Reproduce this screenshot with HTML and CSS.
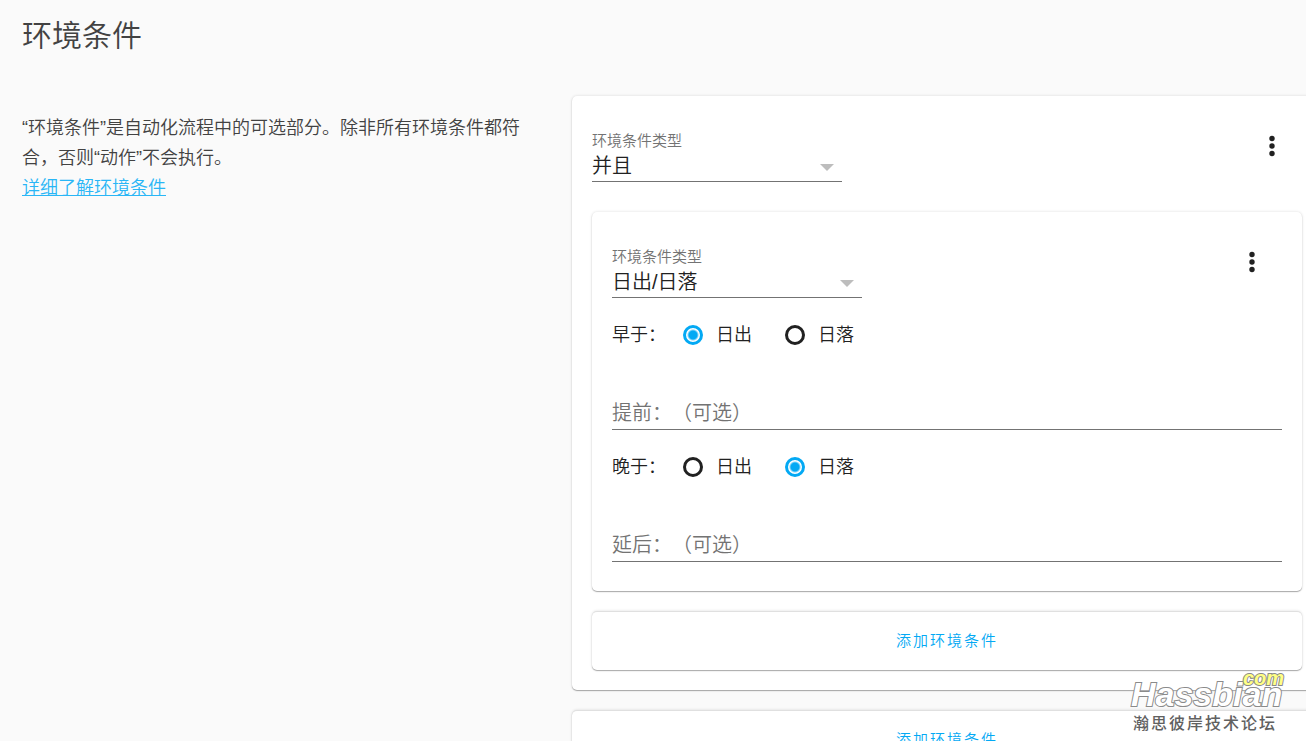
FILE: index.html
```html
<!DOCTYPE html>
<html lang="zh-CN">
<head>
<meta charset="utf-8">
<meta name="viewport" content="width=device-width, initial-scale=1">
<title>环境条件</title>
<link rel="stylesheet" href="styles.css">
</head>
<body>
<main class="section">
  <h1 class="section-title">环境条件</h1>
  <div class="section-body">
    <div class="intro">
      <p class="intro-text">“环境条件”是自动化流程中的可选部分。除非所有环境条件都符合，否则“动作”不会执行。</p>
      <a class="intro-link" href="#">详细了解环境条件</a>
    </div>
    <div class="panel">
      <section class="card">
        <header class="card-head">
          <div class="dropdown">
            <label class="dropdown-label" for="type-outer">环境条件类型</label>
            <select class="dropdown-select" id="type-outer"><option>并且</option></select>
            <svg class="dropdown-arrow" viewBox="0 0 14 7" aria-hidden="true"><path d="M0 0h14L7 7z"/></svg>
          </div>
          <button class="menu-button" type="button" aria-label="更多">
            <svg class="menu-icon" viewBox="0 0 30 30" aria-hidden="true"><circle cx="15" cy="7.5" r="2.7"/><circle cx="15" cy="15" r="2.7"/><circle cx="15" cy="22.5" r="2.7"/></svg>
          </button>
        </header>
        <div class="card-list">
          <section class="card">
            <header class="card-head">
              <div class="dropdown">
                <label class="dropdown-label" for="type-inner">环境条件类型</label>
                <select class="dropdown-select" id="type-inner"><option>日出/日落</option></select>
                <svg class="dropdown-arrow" viewBox="0 0 14 7" aria-hidden="true"><path d="M0 0h14L7 7z"/></svg>
              </div>
              <button class="menu-button" type="button" aria-label="更多">
                <svg class="menu-icon" viewBox="0 0 30 30" aria-hidden="true"><circle cx="15" cy="7.5" r="2.7"/><circle cx="15" cy="15" r="2.7"/><circle cx="15" cy="22.5" r="2.7"/></svg>
              </button>
            </header>
            <div class="sun-form">
              <div class="radio-row" role="radiogroup" aria-labelledby="before-label">
                <span class="radio-title" id="before-label">早于：</span>
                <label class="radio-option"><input class="radio" type="radio" name="before" checked>日出</label>
                <label class="radio-option"><input class="radio" type="radio" name="before">日落</label>
              </div>
              <input class="text-field" type="text" aria-label="提前" placeholder="提前：（可选）">
              <div class="radio-row" role="radiogroup" aria-labelledby="after-label">
                <span class="radio-title" id="after-label">晚于：</span>
                <label class="radio-option"><input class="radio" type="radio" name="after">日出</label>
                <label class="radio-option"><input class="radio" type="radio" name="after" checked>日落</label>
              </div>
              <input class="text-field" type="text" aria-label="延后" placeholder="延后：（可选）">
            </div>
          </section>
          <div class="card add-card"><button class="add-button" type="button">添加环境条件</button></div>
        </div>
      </section>
      <div class="card add-card"><button class="add-button" type="button">添加环境条件</button></div>
    </div>
  </div>
</main>
<div class="watermark">
  <svg class="watermark-logo" viewBox="0 0 160 42" role="img" aria-label="Hassbian.com">
    <text class="logo-name" x="1" y="36">Hassbian</text>
    <text class="logo-tld" x="113" y="15">com</text>
  </svg>
  <span class="watermark-text">瀚思彼岸技术论坛</span>
</div>
</body>
</html>
```
FILE: styles.css
```css
* {
  box-sizing: border-box;
}

html,
body {
  height: 100%;
}

body {
  margin: 0;
  position: relative;
  overflow: hidden;
  background: #fafafa;
  color: #212121;
  font-family: "Liberation Sans", "Noto Sans CJK SC", sans-serif;
  font-size: 18px;
  font-weight: 350;
  line-height: 30px;
  text-spacing-trim: space-all;
}

button,
input,
select {
  font: inherit;
  color: inherit;
}

.section {
  margin: 0 -16px 0 22px;
}

.section-title {
  margin: 0;
  padding: 16px 0 40px;
  color: #424242;
  font-size: 30px;
  font-weight: 350;
  line-height: 40px;
}

.section-body {
  display: flex;
  align-items: flex-start;
  gap: 50px;
}

.intro {
  flex: 0 0 500px;
  padding-top: 17px;
  color: #424242;
}

.intro-text {
  margin: 0;
}

.intro-link {
  color: #29b6f6;
}

.panel {
  display: flex;
  flex: 1;
  flex-direction: column;
  gap: 20px;
}

.card {
  border-radius: 5px;
  background: #fff;
  box-shadow: 0 1px 1px rgba(0, 0, 0, 0.3), 0 0 3px rgba(0, 0, 0, 0.14);
}

.card-head {
  display: flex;
  align-items: flex-start;
  justify-content: space-between;
  padding: 35px 20px 0;
}

.card-list {
  display: flex;
  flex-direction: column;
  gap: 20px;
  padding: 30px 20px 20px;
}

.dropdown {
  position: relative;
  display: flex;
  flex-direction: column;
  width: 250px;
}

.dropdown-label {
  color: #737373;
  font-size: 15px;
  line-height: 20px;
}

.dropdown-select {
  appearance: none;
  height: 31px;
  padding: 0;
  border: 0;
  border-bottom: 1px solid #737373;
  border-radius: 0;
  background: transparent;
  font-size: 20px;
  line-height: 30px;
}

.dropdown-arrow {
  position: absolute;
  right: 8px;
  bottom: 11px;
  width: 14px;
  height: 7px;
  fill: #bdbdbd;
  pointer-events: none;
}

.menu-button {
  width: 60px;
  height: 30px;
  padding: 0 15px;
  border: 0;
  background: transparent;
}

.menu-icon {
  display: block;
  width: 30px;
  height: 30px;
  fill: #212121;
}

.sun-form {
  padding: 14px 20px 29px;
}

.radio-row {
  display: flex;
  align-items: center;
  height: 45px;
}

.radio-title {
  margin-right: 17px;
}

.radio-option {
  display: flex;
  align-items: center;
  gap: 13px;
  margin-right: 33px;
}

.radio {
  appearance: none;
  width: 20px;
  height: 20px;
  margin: 0;
  border: 3px solid #212121;
  border-radius: 50%;
}

.radio:checked {
  border-color: #03a9f4;
  background: radial-gradient(circle, #03a9f4 4px, #fff 6px);
}

.text-field {
  display: block;
  width: 100%;
  height: 32px;
  margin: 41px 0 14px;
  padding: 0;
  border: 0;
  border-bottom: 1px solid #737373;
  background: transparent;
  font-size: 20px;
}

.text-field:last-child {
  margin-bottom: 0;
}

.text-field::placeholder {
  color: #737373;
  opacity: 1;
}

.add-card {
  border-top: 1px solid #e0e0e0;
}

.add-button {
  display: block;
  width: 100%;
  height: 58px;
  padding: 0;
  border: 0;
  background: transparent;
  color: #03a9f4;
  font-size: 15px;
  letter-spacing: 2px;
}

.watermark {
  position: absolute;
  right: 16px;
  bottom: 5px;
  display: flex;
  flex-direction: column;
  width: 160px;
}

.watermark-logo {
  display: block;
  width: 160px;
  height: 42px;
  font-style: italic;
  font-weight: 700;
  stroke: #8a8a8a;
  stroke-width: 2px;
  paint-order: stroke;
}

.logo-name {
  fill: #fff;
  font-size: 34px;
}

.logo-tld {
  fill: #ffff85;
  font-size: 20px;
}

.watermark-text {
  padding-left: 3px;
  color: #616161;
  font-size: 16px;
  font-weight: 500;
  line-height: 24px;
  letter-spacing: 2px;
}
```
